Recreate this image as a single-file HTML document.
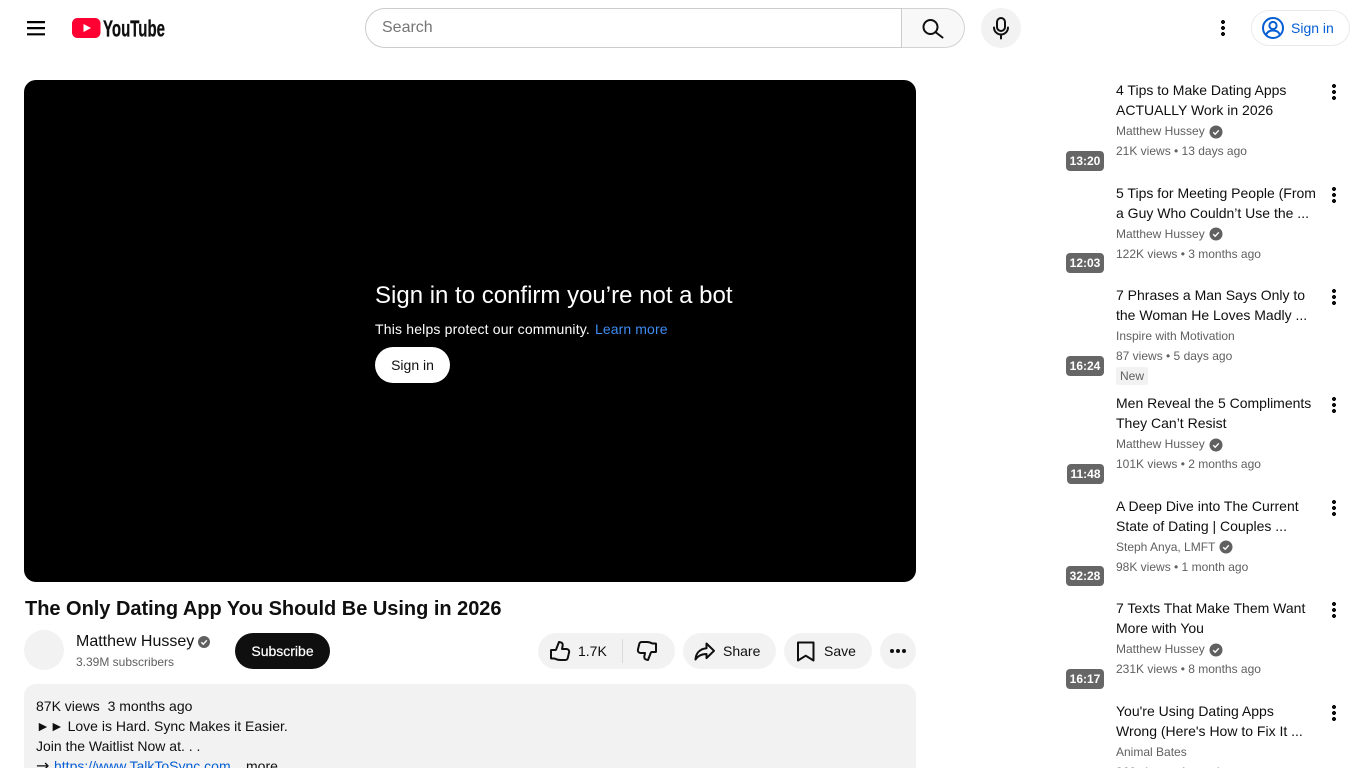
<!DOCTYPE html>
<html lang="en"><head><meta charset="utf-8"><title>The Only Dating App You Should Be Using in 2026 - YouTube</title>
<style>
html,body{margin:0;padding:0;background:#fff;width:1366px;height:768px;overflow:hidden}
body{position:relative;font-family:"Liberation Sans",Arial,sans-serif;font-size:14px;color:#0f0f0f}
.a{position:absolute;white-space:nowrap}
svg{position:absolute;display:block;overflow:visible}
.t{position:absolute;left:1116px;font-size:14px;line-height:20px;height:20px;color:#0f0f0f;white-space:nowrap}
.c{position:absolute;left:1116px;font-size:12px;line-height:20px;height:20px;color:#606060;white-space:nowrap}
.b{position:absolute;width:38px;height:20px;background:#666;border-radius:4px;color:#fff;font-size:12px;font-weight:bold;line-height:20px;text-align:center}
.k{position:absolute;left:1332px;width:4px;height:16px;background:radial-gradient(circle 2px at 2px 2px,#0f0f0f 98%,transparent) 0 0/4px 6px repeat-y}
.v{position:absolute;width:14px;height:14px}
.pill{position:absolute;background:#f2f2f2;border-radius:18px;height:36px;top:633px}
</style></head><body>

<!-- header -->
<svg style="left:24px;top:16px" width="24" height="24" viewBox="0 0 24 24"><path fill="#000" d="M3 5h18v2.200H3zM3 11h18v2.200H3zM3 17.200h18v2.200H3z"/></svg>
<svg style="left:72px;top:18px" width="29" height="20" viewBox="0 0 29 20"><rect width="28.500" height="20" rx="5.500" fill="#ff0033"/><path d="M11.500 6l7.500 4-7.500 4z" fill="#fff"/></svg>
<svg style="left:103px;top:14px" width="64" height="28" viewBox="0 0 64 28"><text x="0" y="22.500" font-family="Liberation Sans" font-size="23.500" font-weight="bold" fill="#0f0f0f" stroke="#0f0f0f" stroke-width=".3" textLength="62" lengthAdjust="spacingAndGlyphs">YouTube</text></svg>

<div class="a" style="left:365px;top:8px;width:537px;height:40px;box-sizing:border-box;border:1px solid #ccc;border-right:1px solid #ccc;border-radius:20px 0 0 20px"></div>
<div class="a" style="left:382px;top:18px;font-size:16px;line-height:20px;color:#757575">Search</div>
<div class="a" style="left:902px;top:8px;width:63px;height:40px;box-sizing:border-box;background:#f8f8f8;border:1px solid #d3d3d3;border-left:0;border-radius:0 20px 20px 0"></div>
<svg style="left:921px;top:16px" width="24" height="24" viewBox="0 0 24 24" fill="none" stroke="#0f0f0f" stroke-width="2" stroke-linecap="round"><circle cx="9.500" cy="11" r="7"/><path d="M15 16.500L21.500 21.500"/></svg>
<div class="a" style="left:981px;top:8px;width:40px;height:40px;border-radius:50%;background:#f2f2f2"></div>
<svg style="left:989px;top:16px" width="24" height="24" viewBox="0 0 24 24" fill="none" stroke="#0f0f0f" stroke-width="2" stroke-linecap="round"><rect x="8" y="2" width="8" height="13" rx="4"/><path d="M5 11.500a7 7 0 0014 0M12 18.500v4"/></svg>
<div class="k" style="left:1221px;top:20px"></div>
<div class="a" style="left:1251px;top:10px;width:99px;height:36px;box-sizing:border-box;border:1px solid #eaeaea;border-radius:18px"></div>
<svg style="left:1261px;top:16px" width="24" height="24" viewBox="0 0 24 24" fill="none" stroke="#065fd4" stroke-width="2"><circle cx="12" cy="12" r="10"/><circle cx="12" cy="9.500" r="3.600"/><path d="M5.200 18.600c1-2.600 3.600-4.100 6.800-4.100s5.800 1.500 6.800 4.100"/></svg>
<div class="a" style="left:1291px;top:18px;line-height:20px;color:#065fd4">Sign in</div>

<!-- player -->
<div class="a" style="left:24px;top:80px;width:892px;height:502px;background:#000;border-radius:12px"></div>
<div class="a" style="left:375px;top:281px;font-size:24px;line-height:30px;color:#fff">Sign in to confirm you’re not a bot</div>
<div class="a" style="left:375px;top:319px;line-height:20px;color:#fff;letter-spacing:.18px">This helps protect our community.</div>
<div class="a" style="left:595px;top:319px;line-height:20px;color:#3f8cf2;letter-spacing:.1px">Learn more</div>
<div class="a" style="left:375px;top:347px;width:75px;height:36px;background:#fff;border-radius:18px;text-align:center;line-height:36px;color:#0f0f0f">Sign in</div>

<!-- title -->
<div class="a" style="left:25px;top:595px;font-size:20px;line-height:28px;font-weight:bold;color:#0f0f0f;letter-spacing:-.02px">The Only Dating App You Should Be Using in 2026</div>
<div class="a" style="left:24px;top:630px;width:40px;height:40px;border-radius:50%;background:#f2f2f2"></div>
<div class="a" style="left:76px;top:632px;font-size:16px;line-height:20px">Matthew Hussey</div>
<svg class="v" style="left:197px;top:635px" viewBox="0 0 14 14"><circle cx="7" cy="7" r="6" fill="#606060"/><path d="M4.300 7.200l2 2 3.500-3.900" fill="none" stroke="#fff" stroke-width="1.400"/></svg>
<div class="a" style="left:76px;top:652px;font-size:12px;line-height:20px;color:#606060">3.39M subscribers</div>
<div class="a" style="left:235px;top:633px;width:95px;height:36px;background:#0f0f0f;border-radius:18px;color:#fff;text-align:center;line-height:36px;-webkit-text-stroke:.2px #fff">Subscribe</div>

<div class="pill" style="left:538px;width:137px"></div>
<svg style="left:548px;top:639px" width="24" height="24" viewBox="0 0 24 24" fill="none" stroke="#0f0f0f" stroke-width="2" stroke-linejoin="round"><path d="M3.500 11H7c.6 0 1-.3 1.200-.8L11 3l1.500.3c1.600.3 2.500 1.700 2.200 3.200L14 10h4.500c1.700 0 3 1.600 2.600 3.300l-1.300 5.500c-.3 1.300-1.400 2.200-2.700 2.200H12c-2.200 0-3.800-.7-5.500-1.500H3.500a.5.500 0 01-.5-.5v-7.500a.5.500 0 01.5-.5z"/></svg>
<div class="a" style="left:578px;top:641px;line-height:20px">1.7K</div>
<div class="a" style="left:622px;top:639px;width:1px;height:24px;background:#d9d9d9"></div>
<svg style="left:634.500px;top:639px" width="24" height="24" viewBox="0 0 24 24" fill="none" stroke="#0f0f0f" stroke-width="2" stroke-linejoin="round"><path d="M20.500 13H17c-.6 0-1 .3-1.200.8L13 21l-1.500-.3c-1.600-.3-2.500-1.700-2.200-3.200L10 14H5.500c-1.700 0-3-1.600-2.600-3.300L4.200 5.200C4.500 3.900 5.600 3 6.900 3H12c2.200 0 3.800.7 5.500 1.500h3a.5.500 0 01.5.5v7.500a.5.500 0 01-.5.500z"/></svg>

<div class="pill" style="left:683px;width:93px"></div>
<svg style="left:693px;top:639px" width="24" height="24" viewBox="0 0 24 24" fill="none" stroke="#0f0f0f" stroke-width="2" stroke-linejoin="round"><path d="M13.500 4.500L21 11.800l-7.500 7.300V15c-4.800 0-8.200 1.300-11 5.500.4-6 3.800-10.400 11-11.200z"/></svg>
<div class="a" style="left:723px;top:641px;line-height:20px">Share</div>

<div class="pill" style="left:784px;width:88px"></div>
<svg style="left:794px;top:639px" width="24" height="24" viewBox="0 0 24 24" fill="none" stroke="#0f0f0f" stroke-width="2" stroke-linejoin="round"><path d="M4 3.500h15.500v18l-7.750-4.800L4 21.500z"/></svg>
<div class="a" style="left:824px;top:641px;line-height:20px">Save</div>

<div class="pill" style="left:880px;width:36px"></div>
<svg style="left:886px;top:639px" width="24" height="24" viewBox="0 0 24 24" fill="#0f0f0f"><circle cx="6" cy="12" r="2"/><circle cx="12" cy="12" r="2"/><circle cx="18" cy="12" r="2"/></svg>

<!-- description -->
<div class="a" style="left:24px;top:684px;width:892px;height:120px;background:#f2f2f2;border-radius:12px"></div>
<div class="a" style="left:36px;top:696px;line-height:20px">87K views&nbsp; 3 months ago</div>
<div class="a" style="left:36px;top:716px;line-height:20px">►► Love is Hard. Sync Makes it Easier.</div>
<div class="a" style="left:36px;top:736px;line-height:20px">Join the Waitlist Now at. . .</div>
<div class="a" style="left:36px;top:756px;line-height:20px;font-family:'DejaVu Sans',sans-serif;font-size:16px">→</div>
<div class="a" style="left:54px;top:756px;line-height:20px;color:#065fd4">https://www.TalkToSync.com</div>
<div class="a" style="left:246px;top:756px;line-height:20px">more</div>

<!-- sidebar -->
<div class="b" style="left:1066px;top:151px">13:20</div>
<div class="t" style="top:80px">4 Tips to Make Dating Apps</div>
<div class="t" style="top:100px">ACTUALLY Work in 2026</div>
<div class="c" style="top:121px">Matthew Hussey</div>
<svg class="v" style="left:1209px;top:125px" viewBox="0 0 14 14"><circle cx="7" cy="7" r="6.500" fill="#606060"/><path d="M4.200 7.200l2 2 3.600-3.900" fill="none" stroke="#fff" stroke-width="1.400"/></svg>
<div class="c" style="top:141px">21K views • 13 days ago</div>
<div class="k" style="top:84px"></div>

<div class="b" style="left:1066px;top:253px">12:03</div>
<div class="t" style="top:183px">5 Tips for Meeting People (From</div>
<div class="t" style="top:203px">a Guy Who Couldn’t Use the ...</div>
<div class="c" style="top:224px">Matthew Hussey</div>
<svg class="v" style="left:1209px;top:227px" viewBox="0 0 14 14"><circle cx="7" cy="7" r="6.500" fill="#606060"/><path d="M4.200 7.200l2 2 3.600-3.900" fill="none" stroke="#fff" stroke-width="1.400"/></svg>
<div class="c" style="top:244px">122K views • 3 months ago</div>
<div class="k" style="top:187px"></div>

<div class="b" style="left:1066px;top:356px">16:24</div>
<div class="t" style="top:285px">7 Phrases a Man Says Only to</div>
<div class="t" style="top:305px">the Woman He Loves Madly ...</div>
<div class="c" style="top:326px">Inspire with Motivation</div>
<div class="c" style="top:346px">87 views • 5 days ago</div>
<div class="a" style="left:1116px;top:367px;width:32px;height:18px;background:#f2f2f2;border-radius:2px;font-size:12px;line-height:18px;color:#606060;text-align:center">New</div>
<div class="k" style="top:289px"></div>

<div class="b" style="left:1067px;top:464px;width:37px">11:48</div>
<div class="t" style="top:393px">Men Reveal the 5 Compliments</div>
<div class="t" style="top:413px">They Can’t Resist</div>
<div class="c" style="top:434px">Matthew Hussey</div>
<svg class="v" style="left:1209px;top:438px" viewBox="0 0 14 14"><circle cx="7" cy="7" r="6.500" fill="#606060"/><path d="M4.200 7.200l2 2 3.600-3.900" fill="none" stroke="#fff" stroke-width="1.400"/></svg>
<div class="c" style="top:454px">101K views • 2 months ago</div>
<div class="k" style="top:397px"></div>

<div class="b" style="left:1066px;top:566px">32:28</div>
<div class="t" style="top:496px">A Deep Dive into The Current</div>
<div class="t" style="top:516px">State of Dating | Couples ...</div>
<div class="c" style="top:537px">Steph Anya, LMFT</div>
<svg class="v" style="left:1219px;top:540px" viewBox="0 0 14 14"><circle cx="7" cy="7" r="6.500" fill="#606060"/><path d="M4.200 7.200l2 2 3.600-3.900" fill="none" stroke="#fff" stroke-width="1.400"/></svg>
<div class="c" style="top:557px">98K views • 1 month ago</div>
<div class="k" style="top:500px"></div>

<div class="b" style="left:1066px;top:669px">16:17</div>
<div class="t" style="top:598px">7 Texts That Make Them Want</div>
<div class="t" style="top:618px">More with You</div>
<div class="c" style="top:639px">Matthew Hussey</div>
<svg class="v" style="left:1209px;top:643px" viewBox="0 0 14 14"><circle cx="7" cy="7" r="6.500" fill="#606060"/><path d="M4.200 7.200l2 2 3.600-3.900" fill="none" stroke="#fff" stroke-width="1.400"/></svg>
<div class="c" style="top:659px">231K views • 8 months ago</div>
<div class="k" style="top:602px"></div>

<div class="t" style="top:701px">You're Using Dating Apps</div>
<div class="t" style="top:721px">Wrong (Here's How to Fix It ...</div>
<div class="c" style="top:742px">Animal Bates</div>
<div class="c" style="top:762px">360 views • 1 month ago</div>
<div class="k" style="top:705px"></div>

</body></html>
